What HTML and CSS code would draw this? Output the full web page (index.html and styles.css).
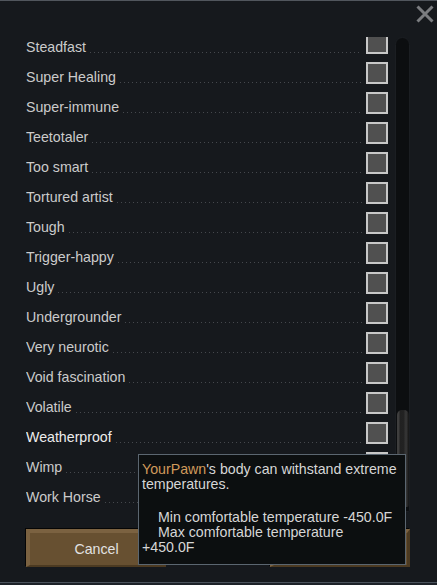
FILE: index.html
```html
<!DOCTYPE html>
<html>
<head>
<meta charset="utf-8">
<link rel="stylesheet" href="styles.css">
</head>
<body>
<div class="window">
  <div class="topbar">
    <svg class="close" width="18" height="18" viewBox="0 0 18 18"><path d="M1.5 1.5 L16.5 16.5 M16.5 1.5 L1.5 16.5" stroke="#7b7d80" stroke-width="3" fill="none"/></svg>
  </div>
  <div class="content">
    <div class="list">
      <div class="rows">
        <div class="row"><span class="label">Steadfast</span><span class="dots"></span><span class="check"></span></div>
        <div class="row"><span class="label">Super Healing</span><span class="dots"></span><span class="check"></span></div>
        <div class="row"><span class="label">Super-immune</span><span class="dots"></span><span class="check"></span></div>
        <div class="row"><span class="label">Teetotaler</span><span class="dots"></span><span class="check"></span></div>
        <div class="row"><span class="label">Too smart</span><span class="dots"></span><span class="check"></span></div>
        <div class="row"><span class="label">Tortured artist</span><span class="dots"></span><span class="check"></span></div>
        <div class="row"><span class="label">Tough</span><span class="dots"></span><span class="check"></span></div>
        <div class="row"><span class="label">Trigger-happy</span><span class="dots"></span><span class="check"></span></div>
        <div class="row"><span class="label">Ugly</span><span class="dots"></span><span class="check"></span></div>
        <div class="row"><span class="label">Undergrounder</span><span class="dots"></span><span class="check"></span></div>
        <div class="row"><span class="label">Very neurotic</span><span class="dots"></span><span class="check"></span></div>
        <div class="row"><span class="label">Void fascination</span><span class="dots"></span><span class="check"></span></div>
        <div class="row"><span class="label">Volatile</span><span class="dots"></span><span class="check"></span></div>
        <div class="row hover"><span class="label">Weatherproof</span><span class="dots"></span><span class="check"></span></div>
        <div class="row"><span class="label">Wimp</span><span class="dots"></span><span class="check"></span></div>
        <div class="row"><span class="label">Work Horse</span><span class="dots"></span><span class="check"></span></div>
      </div>
    </div>
    <div class="track"><div class="thumb"></div></div>
  </div>
  <div class="buttons">
    <div class="btn">Cancel</div>
    <div class="btn">Accept</div>
  </div>
  <div class="footer"></div>
  <div class="tooltip">
    <div class="tip-lines"><span class="pawn">YourPawn</span>'s body can withstand extreme<br>temperatures.</div>
    <div class="tip-lines stats"><span class="indent">Min comfortable temperature -450.0F</span><br><span class="indent">Max comfortable temperature</span><br>+450.0F</div>
  </div>
</div>
</body>
</html>
```

FILE: styles.css
```css
html, body {
  margin: 0;
  padding: 0;
  background: #16191d;
}
body {
  font-family: "Liberation Sans", Arial, sans-serif;
  font-size: 14.2px;
  color: #cbcbcb;
}
.window {
  position: relative;
  width: 437px;
  height: 585px;
  box-sizing: border-box;
  border-top: 1px solid #51565d;
  display: flex;
  flex-direction: column;
  overflow: hidden;
}
.topbar {
  height: 36px;
  box-sizing: border-box;
  display: flex;
  justify-content: flex-end;
  align-items: flex-start;
  padding: 4px 3px 0 0;
}
.close {
  display: block;
}
.content {
  height: 475px;
  display: flex;
  padding-left: 26px;
  gap: 7px;
}
.list {
  width: 362px;
  overflow: hidden;
}
.rows {
  margin-top: -5px;
}
.row {
  height: 30px;
  display: flex;
  align-items: flex-start;
}
.label {
  line-height: 30px;
  white-space: nowrap;
}
.row.hover .label {
  color: #ededed;
}
.dots {
  flex: 1;
  height: 1px;
  margin: 20px 4px 0 4px;
  background-image: linear-gradient(to right, #45484d 1px, transparent 1px);
  background-size: 4px 1px;
}
.check {
  width: 22px;
  height: 22px;
  box-sizing: border-box;
  border: 2px solid #c8c8c8;
  background: #505050;
  flex: none;
}
.track {
  width: 15px;
  box-sizing: border-box;
  background: #0c0e10;
  border: 1px solid #1b1e22;
  border-radius: 8px 8px 2px 2px;
  display: flex;
  flex-direction: column;
}
.thumb {
  margin: auto 0 4px 1px;
  width: 12px;
  height: 97px;
  box-sizing: border-box;
  border-radius: 5px 5px 2px 2px;
  background: linear-gradient(to right, #3e3e3e 0, #3e3e3e 2px, #212121 3px, #222 7px, #333 8px, #333 10px, #1a1a1a 11px);
}
.buttons {
  margin-top: 17px;
  height: 38px;
  display: flex;
  justify-content: space-between;
  padding: 0 27px 0 26px;
}
.btn {
  width: 140px;
  box-sizing: border-box;
  background: #675031;
  border-style: solid;
  border-width: 4px 3px 2px 4px;
  border-color: #7b6241 #4c3a21 #4c3a21 #7b6241;
  box-shadow: -1px -1px 0 #050505;
  color: #e2e2e2;
  display: flex;
  align-items: center;
  justify-content: center;
}
.footer {
  margin-top: auto;
  height: 3px;
  box-sizing: border-box;
  border-top: 1px solid #4a525b;
  background: #1d2228;
}
.tooltip {
  position: absolute;
  left: 138px;
  top: 453px;
  width: 268px;
  height: 111px;
  box-sizing: border-box;
  background: #0c0f10;
  border: 1px solid #5b6670;
  padding: 7px 3px 0 3px;
  color: #d6d6d6;
  line-height: 15px;
  white-space: nowrap;
}
.pawn {
  color: #d09a5b;
}
.stats {
  margin-top: 18px;
}
.indent {
  padding-left: 16px;
}
```
